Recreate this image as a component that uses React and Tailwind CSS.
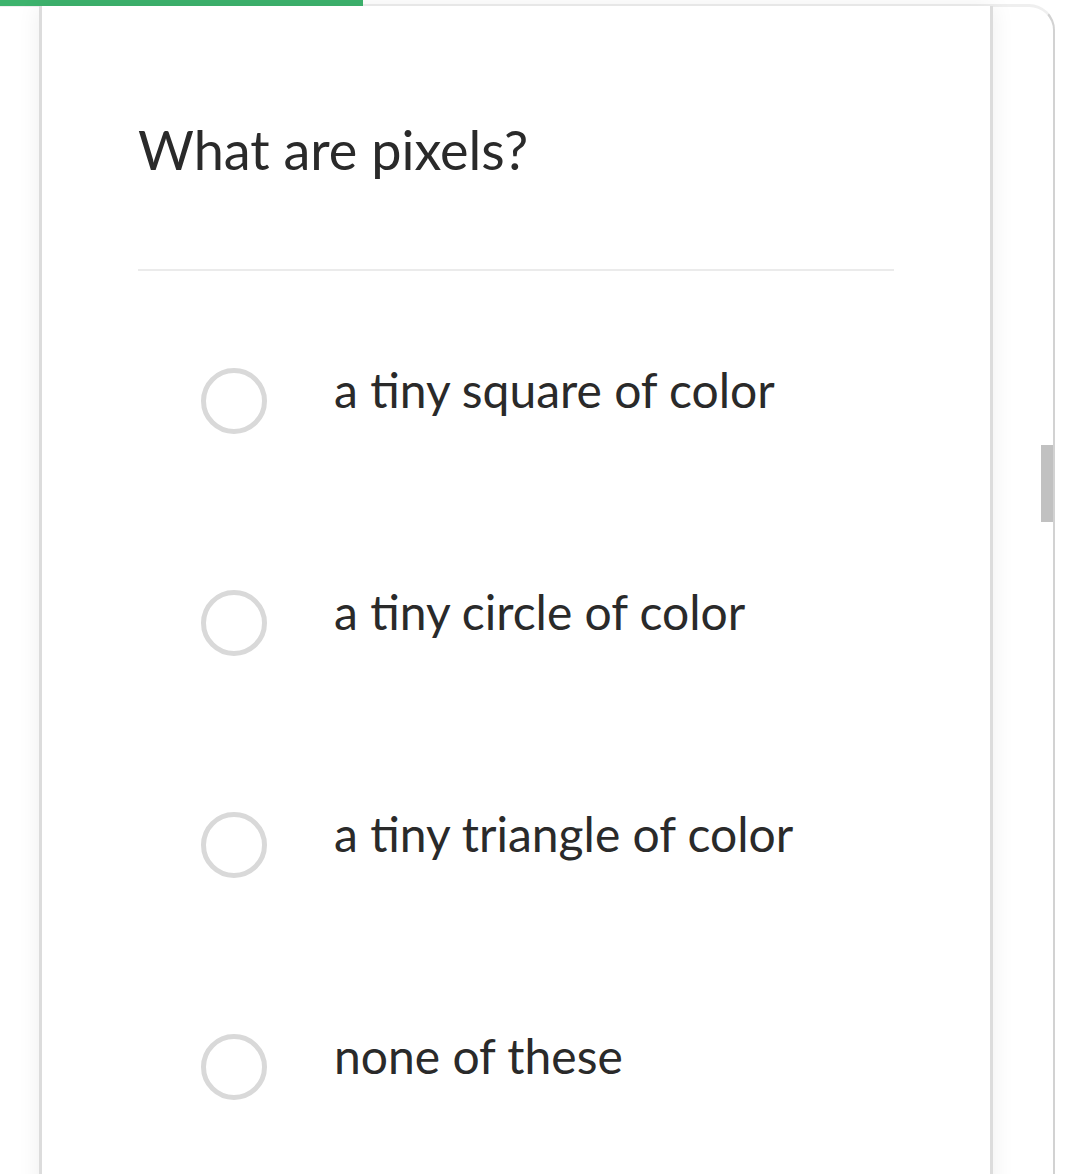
export default function App() {
  const options = [
    "a tiny square of color",
    "a tiny circle of color",
    "a tiny triangle of color",
    "none of these",
  ];
  return (
    <div
      className="relative w-[1067px] h-[1174px] overflow-hidden bg-white"
      style={{ fontFamily: "Lato, 'Open Sans', sans-serif" }}
    >
      {/* outer frame */}
      <div className="absolute left-[-40px] top-[4px] w-[1095px] h-[1300px] border-t-[3px] border-t-[#efefef] border-r-2 border-r-[#d2d2d2] rounded-tr-[26px]" />
      {/* progress bar */}
      <div className="absolute left-0 top-0 w-[363px] h-[6px] bg-[#3db36d]" />
      {/* scrollbar thumb */}
      <div className="absolute left-[1041px] top-[445px] w-[12px] h-[77px] bg-[#c1c1c1]" />

      <div className="relative ml-[39px] mt-[6px] w-[954px] h-[1300px] bg-white border-x-[3px] border-x-[#dcdcdc] shadow-[0_0_22px_rgba(0,0,0,0.07)]">
        <div className="pl-[96px]">
          <h1 className="pt-[117px] text-[54px] leading-none text-[#2a2a2a] font-normal">
            What are pixels?
          </h1>
          <div className="mt-[92px] w-[756px] h-[2px] bg-[#ebebeb]" />
          <div className="mt-[19px] flex flex-col">
            {options.map((o) => (
              <div key={o} className="flex items-center h-[222px]">
                <div className="ml-[63px] w-[66px] h-[66px] rounded-full border-[5px] border-[#d9d9d9] shrink-0" />
                <span className="ml-[67px] text-[48px] leading-none text-[#2a2a2a] pb-[22px]">
                  {o}
                </span>
              </div>
            ))}
          </div>
        </div>
      </div>
    </div>
  );
}
